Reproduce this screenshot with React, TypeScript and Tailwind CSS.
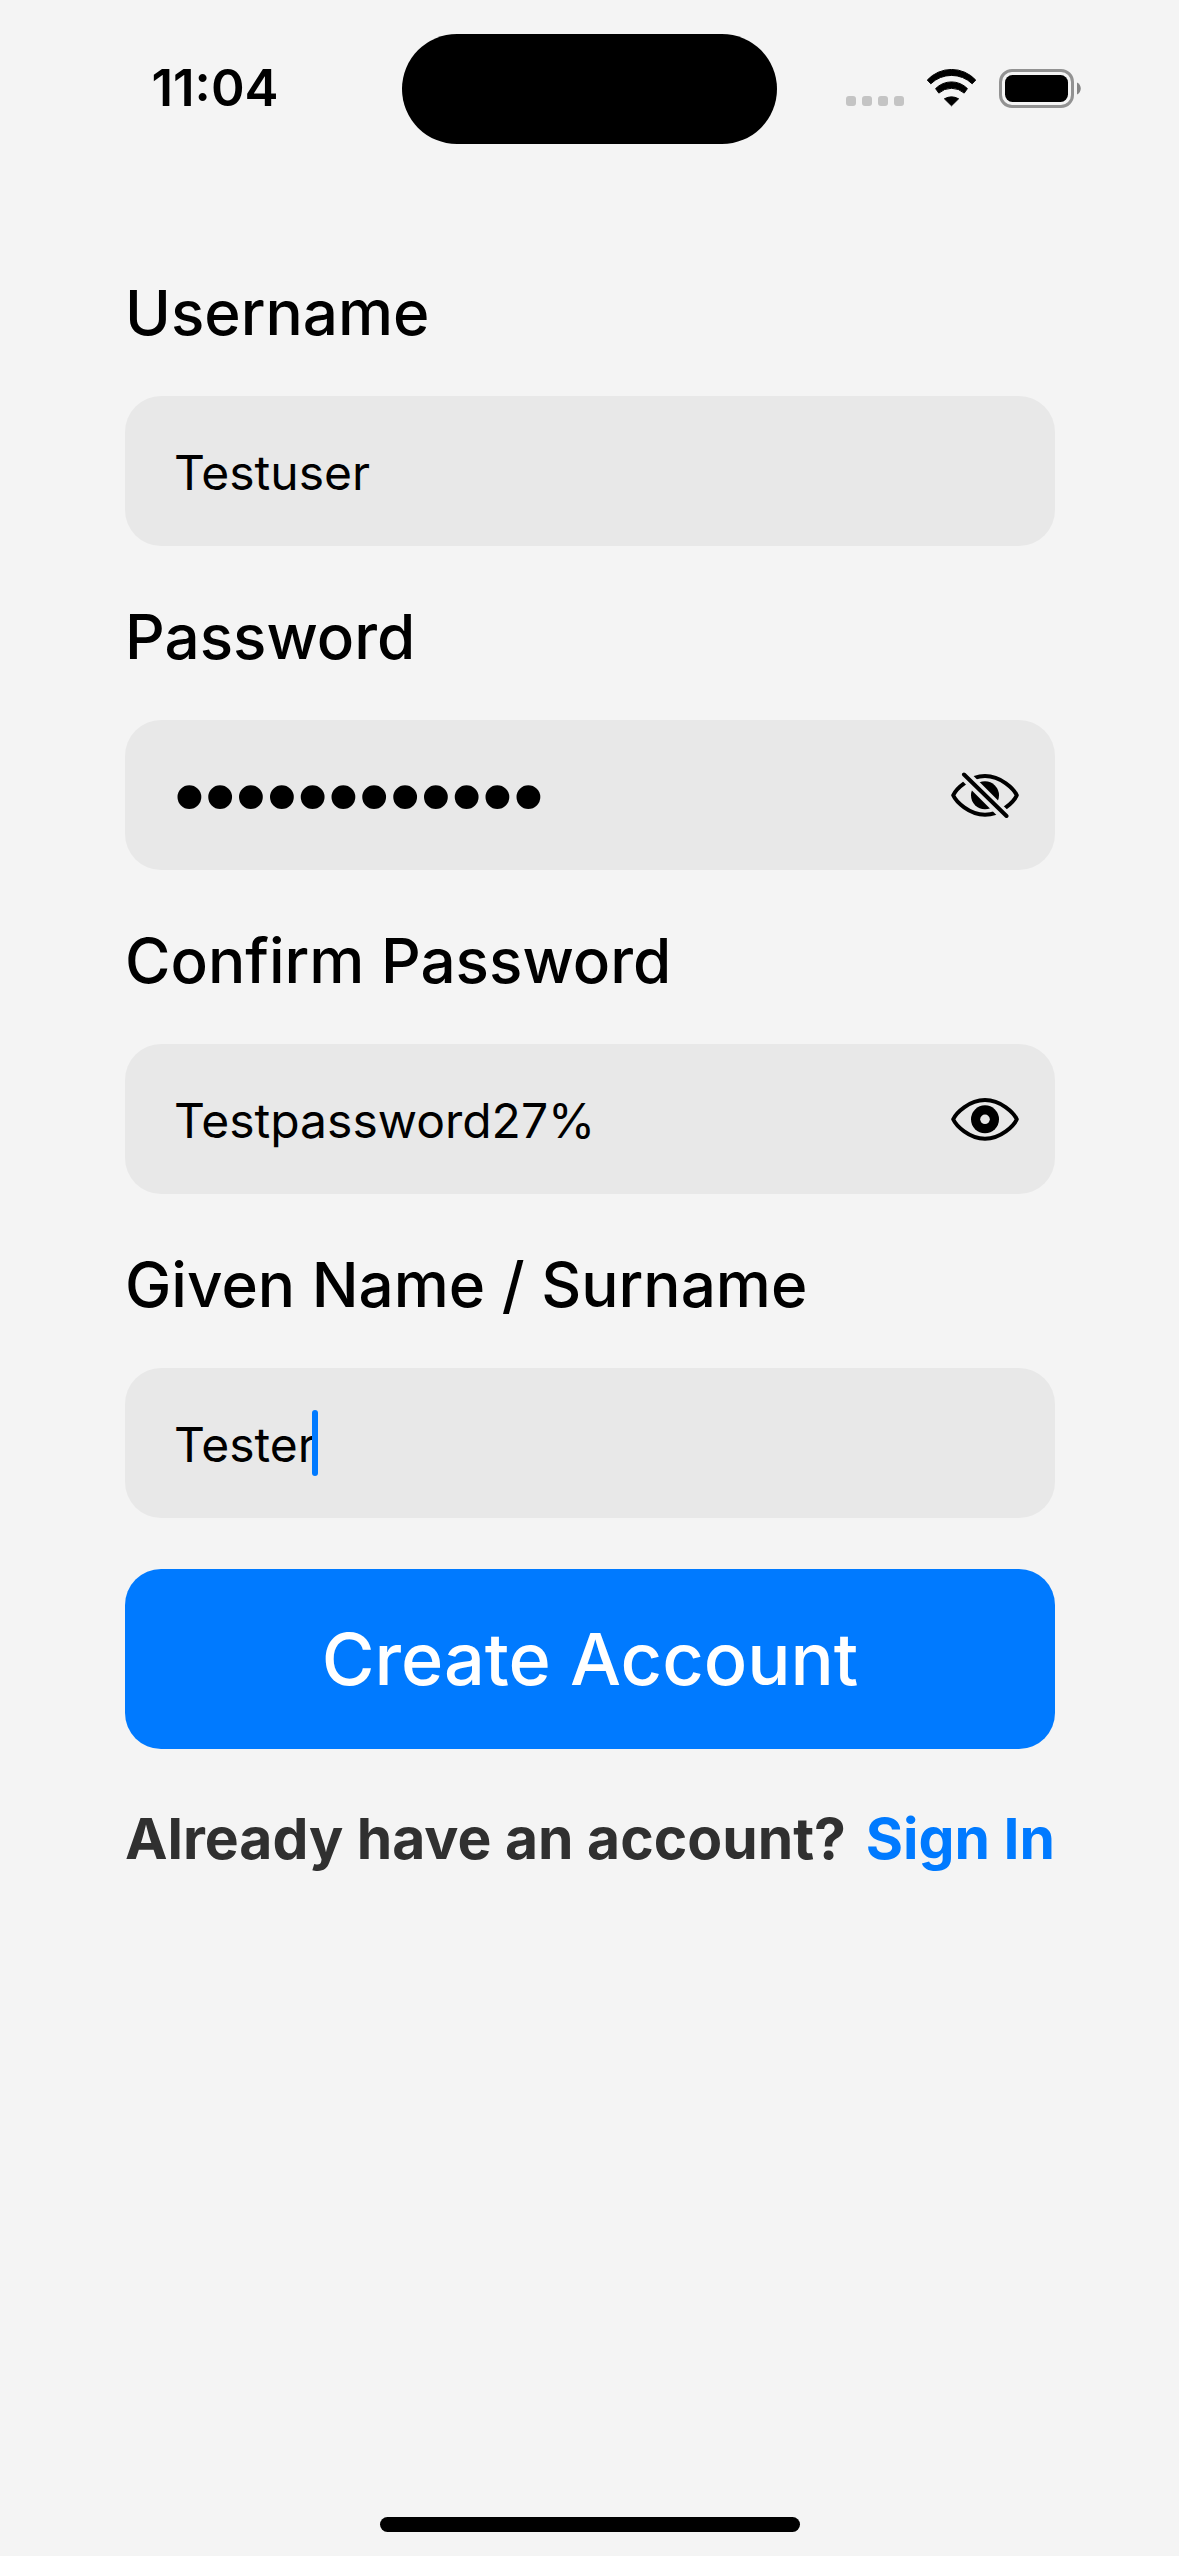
import { useState } from "react";

const fieldClass =
  "block h-[150px] w-full rounded-[36px] bg-[#e8e8e8] pt-[2px] pl-[49px] text-black outline-none";

function WifiIcon() {
  return (
    <svg width="51" height="38" viewBox="0 0 51 38" aria-hidden="true">
      <path
        d="M1.3 11A33 33 0 0 1 49.7 11L46.2 14.8A29.7 29.7 0 0 0 4.8 14.8Z"
        stroke="black"
        strokeWidth="1"
        strokeLinejoin="round"
      />
      <path
        d="M9.6 19.6A22.2 22.2 0 0 1 41.4 19.6L38.2 24.1A19.1 19.1 0 0 0 12.8 24.1Z"
        stroke="black"
        strokeWidth="1"
        strokeLinejoin="round"
      />
      <path d="M18.4 29.8A12 9 0 0 1 32.6 29.8L25.5 36.8Z" stroke="black" strokeWidth="1" strokeLinejoin="round" />
    </svg>
  );
}

function BatteryIcon() {
  return (
    <svg width="82" height="39" viewBox="0 0 82 39" aria-hidden="true">
      <rect x="1.5" y="1.5" width="72" height="36" rx="11.5" fill="none" stroke="#929292" strokeWidth="3" />
      <rect x="6" y="6" width="63" height="27" rx="7.5" />
      <path d="M78 13.5C83 15.5 83 23.5 78 25.5Z" fill="#858585" />
    </svg>
  );
}

function EyeIcon({ slashed }: { slashed: boolean }) {
  return (
    <svg width="68" height="46" viewBox="0 0 68 46" aria-hidden="true">
      <path
        d="M2.2 23.3C5 17 18 4 34 4S63 17 65.8 23.3C63 29.6 50 42.7 34 42.7S5 29.6 2.2 23.3Z"
        fill="none"
        stroke="black"
        strokeWidth="4"
        strokeLinejoin="round"
      />
      <circle cx="34" cy="23.3" r="14" />
      {slashed ? (
        <>
          <path d="M11 .5L58 47.5" stroke="#e8e8e8" strokeWidth="11.4" />
          <path d="M13 2.5L55.5 44" stroke="black" strokeWidth="4" strokeLinecap="round" />
        </>
      ) : (
        <circle cx="34" cy="23.3" r="4.8" fill="#e8e8e8" />
      )}
    </svg>
  );
}

function Label({ id, children }: { id: string; children: string }) {
  return (
    <label htmlFor={id} className="mt-[52px] mb-[44px] block text-[62px] leading-[78px] font-medium">
      {children}
    </label>
  );
}

type PasswordFieldProps = { id: string; label: string; value: string; shown: boolean };

function PasswordField({ id, label, value, shown }: PasswordFieldProps) {
  const [visible, setVisible] = useState(shown);
  return (
    <div>
      <Label id={id}>{label}</Label>
      <div className="relative">
        <input
          id={id}
          type={visible ? "text" : "password"}
          defaultValue={value}
          className={`${fieldClass} ${visible ? "text-[48px]" : "font-['Liberation_Sans',sans-serif] text-[88px]"}`}
        />
        <button
          type="button"
          aria-label={visible ? "Hide password" : "Show password"}
          onClick={() => setVisible(!visible)}
          className="absolute inset-y-0 right-[36px] flex items-center"
        >
          <EyeIcon slashed={!visible} />
        </button>
      </div>
    </div>
  );
}

export default function App() {
  return (
    <div className="flex min-h-screen flex-col bg-[#f4f4f4] font-['Inter',sans-serif] text-black">
      <header className="grid grid-cols-[1fr_375px_1fr] items-center pt-[34px]">
        <div className="pb-[2px] pl-[28px] text-center text-[51px] leading-[60px] font-semibold">11:04</div>
        <div className="h-[110px] rounded-full bg-black" />
        <div className="flex items-center justify-center pr-[29px] pb-[2px]">
          <div className="flex gap-[6px] pt-[26px] pr-[22px]">
            <span className="size-[10px] rounded-[3px] bg-[#c4c4c4]" />
            <span className="size-[10px] rounded-[3px] bg-[#c4c4c4]" />
            <span className="size-[10px] rounded-[3px] bg-[#c4c4c4]" />
            <span className="size-[10px] rounded-[3px] bg-[#c4c4c4]" />
          </div>
          <WifiIcon />
          <div className="pl-[22px]">
            <BatteryIcon />
          </div>
        </div>
      </header>

      <main className="grow pt-[78px] pr-[124px] pl-[125px]">
        <form onSubmit={(e) => e.preventDefault()}>
          <Label id="username">Username</Label>
          <input id="username" type="text" defaultValue="Testuser" className={`${fieldClass} text-[48px]`} />
          <PasswordField id="password" label="Password" value="Testpassword" shown={false} />
          <PasswordField id="confirm" label="Confirm Password" value="Testpassword27%" shown />
          <Label id="name">Given Name / Surname</Label>
          <div className="relative">
            <input id="name" type="text" defaultValue="Tester" className={`${fieldClass} text-[48px]`} />
            <span className="absolute top-[42px] left-[187px] h-[66px] w-[6px] rounded-full bg-[#007aff]" />
          </div>
          <button
            type="submit"
            className="mt-[51px] h-[180px] w-full rounded-[36px] bg-[#007aff] text-[72px] font-medium text-white"
          >
            Create Account
          </button>
        </form>
        <p className="mt-[54px] flex justify-between text-[57px] leading-[72px] font-bold whitespace-nowrap text-[#303030]">
          <span>Already have an account?</span>
          <a href="#sign-in" className="text-[#007aff]">
            Sign In
          </a>
        </p>
      </main>

      <footer className="flex justify-center pb-[24px]">
        <div className="h-[15px] w-[420px] rounded-full bg-black" />
      </footer>
    </div>
  );
}
